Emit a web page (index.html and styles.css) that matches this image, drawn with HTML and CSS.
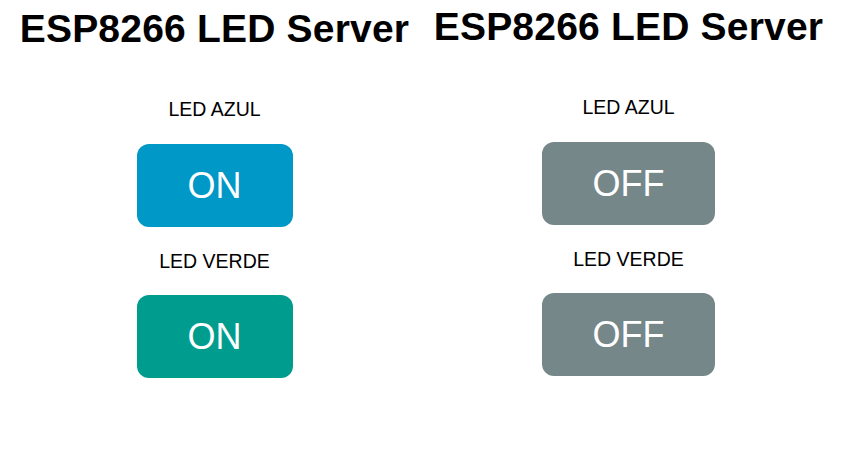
FILE: index.html
```html
<!DOCTYPE html>
<html lang="es">
<head>
<meta charset="utf-8">
<title>ESP8266 LED Server</title>
<link rel="stylesheet" href="styles.css">
</head>
<body>
<main class="screens">
  <section class="panel panel-left">
    <h1 class="title">ESP8266 LED Server</h1>
    <p class="label">LED AZUL</p>
    <a class="button button-blue">ON</a>
    <p class="label">LED VERDE</p>
    <a class="button button-green">ON</a>
  </section>
  <section class="panel panel-right">
    <h1 class="title">ESP8266 LED Server</h1>
    <p class="label">LED AZUL</p>
    <a class="button button-off">OFF</a>
    <p class="label">LED VERDE</p>
    <a class="button button-off">OFF</a>
  </section>
</main>
</body>
</html>
```

FILE: styles.css
```css
html, body {
  margin: 0;
  padding: 0;
  background: #ffffff;
}
body {
  font-family: "Liberation Sans", Arial, sans-serif;
  color: #000;
  width: 853px;
  height: 459px;
  overflow: hidden;
}
.screens {
  display: grid;
  grid-template-columns: 429px 399px;
}
.panel {
  display: flex;
  flex-direction: column;
  align-items: center;
}
.panel-left { padding-top: 9px; }
.panel-right { padding-top: 7px; }
.title {
  margin: 0;
  font-size: 39px;
  line-height: 40px;
  font-weight: 700;
  letter-spacing: 0.2px;
  white-space: nowrap;
}
.label {
  margin: 23px 0 0;
  font-size: 19.5px;
  line-height: 22px;
}
.title + .label { margin-top: 49px; }
.button {
  display: block;
  margin-top: 23px;
  padding: 21px 51px;
  font-size: 36px;
  line-height: 41px;
  color: #fff;
  border-radius: 12px;
  text-decoration: none;
}
.label:nth-of-type(1) + .button { margin-top: 24px; }
.button-blue { background: #0098c6; }
.button-green { background: #009d8f; }
.button-off { background: #758789; }
```
